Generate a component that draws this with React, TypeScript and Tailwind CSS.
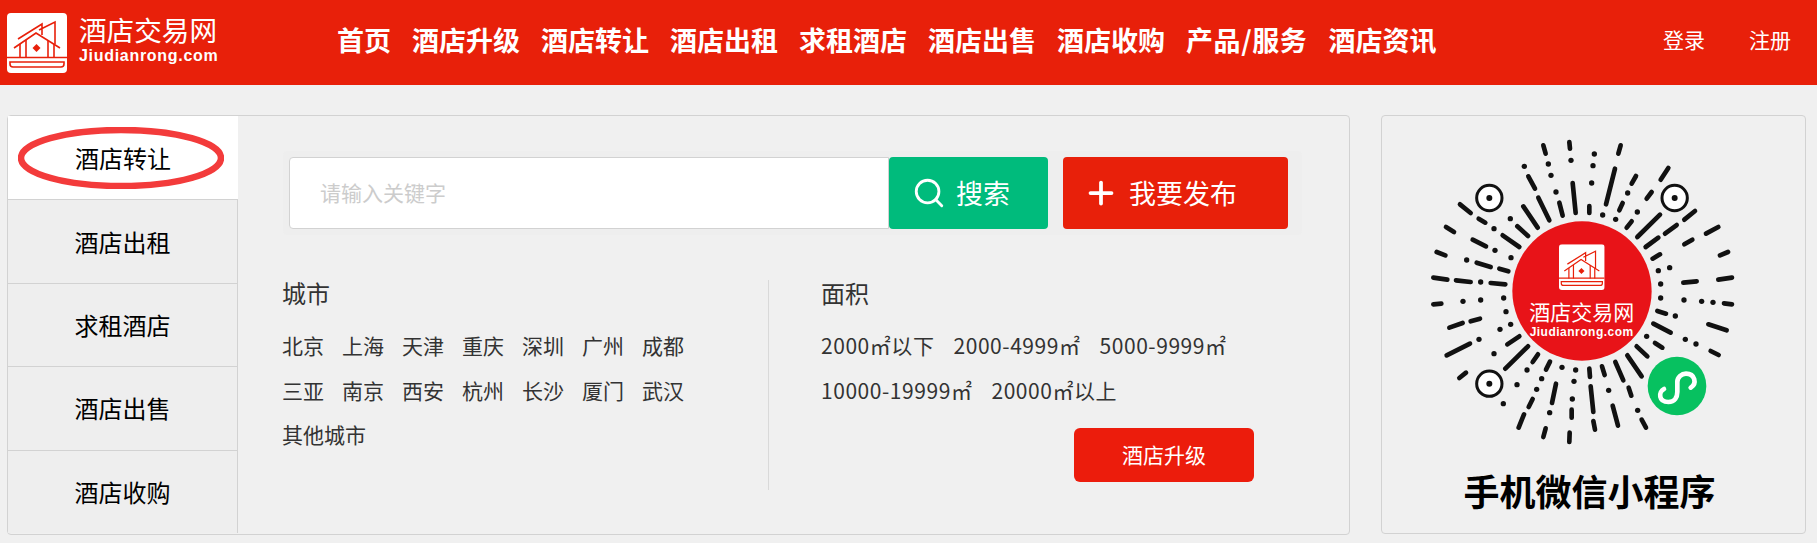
import React from 'react';
import { Search, Plus } from 'lucide-react';

const navItems = ['首页', '酒店升级', '酒店转让', '酒店出租', '求租酒店', '酒店出售', '酒店收购', '产品/服务', '酒店资讯'];
const sideItems = ['酒店转让', '酒店出租', '求租酒店', '酒店出售', '酒店收购'];
const cities = ['北京', '上海', '天津', '重庆', '深圳', '广州', '成都', '三亚', '南京', '西安', '杭州', '长沙', '厦门', '武汉', '其他城市'];

// radial dashes of the mini program code, in 3x coordinates
const dashes = [
  [430, 75, 437, 100], [508, 65, 510, 85], [662, 75, 655, 100], [385, 168, 405, 205], [518, 188, 527, 278],
  [645, 145, 618, 252], [708, 167, 695, 190], [805, 143, 782, 178], [755, 215, 740, 235], [180, 252, 212, 278],
  [236, 295, 256, 307], [138, 320, 162, 335], [415, 232, 448, 300], [478, 247, 488, 286], [568, 257, 568, 278],
  [668, 248, 658, 270], [695, 303, 680, 322], [370, 258, 413, 322], [352, 318, 384, 347], [308, 345, 358, 380],
  [780, 283, 712, 350], [885, 272, 853, 298], [830, 314, 795, 340], [955, 320, 918, 340], [775, 352, 737, 380],
  [877, 358, 853, 372], [780, 402, 758, 415], [984, 395, 960, 405], [110, 395, 136, 405], [218, 358, 258, 378],
  [230, 427, 272, 440], [298, 445, 325, 453], [100, 472, 142, 478], [168, 480, 212, 485], [272, 488, 316, 492],
  [850, 487, 890, 483], [955, 478, 996, 472], [100, 552, 124, 550], [148, 622, 188, 608], [212, 603, 240, 595],
  [972, 549, 996, 552], [772, 572, 798, 580], [760, 610, 812, 637], [925, 612, 980, 630], [140, 705, 210, 670],
  [322, 672, 358, 648], [316, 745, 384, 678], [398, 725, 414, 702], [438, 748, 450, 724], [568, 745, 570, 770],
  [606, 738, 614, 764], [646, 725, 670, 780], [682, 705, 725, 768], [710, 678, 742, 708], [765, 668, 787, 682],
  [932, 692, 956, 704], [178, 773, 198, 757], [468, 790, 456, 848], [572, 798, 580, 875], [686, 802, 694, 826],
  [398, 836, 386, 860], [515, 868, 515, 892], [638, 856, 654, 916], [580, 902, 585, 928], [725, 898, 738, 922],
  [372, 882, 356, 922], [437, 924, 430, 950], [509, 937, 508, 965],
];

const dots = [
  [583, 101], [513, 120], [579, 136], [373, 138], [445, 131], [453, 165], [575, 188], [468, 215], [683, 218],
  [712, 275], [608, 284], [647, 297], [331, 295], [282, 325], [285, 390], [333, 412], [200, 419], [242, 485],
  [242, 539], [189, 543], [311, 533], [318, 574], [332, 612], [300, 627], [775, 451], [809, 442], [782, 491],
  [782, 533], [826, 587], [852, 539], [905, 543], [939, 546], [740, 648], [856, 657], [888, 671], [237, 657],
  [282, 700], [381, 749], [486, 741], [527, 749], [425, 775], [522, 783], [410, 807], [351, 793], [517, 836],
  [449, 877], [310, 850], [626, 810], [713, 870],
];

function LogoMark({ x = 0, y = 0, size = 60 }: { x?: number; y?: number; size?: number }) {
  return (
    <svg x={x} y={y} width={size} height={size} viewBox="0 0 60 60" className="block shrink-0">
      <rect width="60" height="60" rx="4" fill="#fff" />
      <g fill="none" stroke="#e8200a" strokeWidth="1.6">
        <path d="M7 35 29 20 53 35" />
        <path d="M11 26 35 11V22M32 17 48 9V31" />
        <path d="M13 31V45M19 27V45M41 27V45M47 31V45" />
        <path d="M0 44.5H60" />
        <path d="M3 49H57V51Q57 54 54 54H6Q3 54 3 51Z" />
      </g>
      <path d="M29.5 31 33.5 35 29.5 39 25.5 35Z" fill="#e8200a" />
    </svg>
  );
}

function CodeImage() {
  return (
    <svg viewBox="90 50 920 990" className="w-[306.67px] h-[330px] shrink-0">
      <g stroke="#111" strokeWidth="14" strokeLinecap="round">
        {dashes.map((d, i) => (
          <line key={i} x1={d[0]} y1={d[1]} x2={d[2]} y2={d[3]} />
        ))}
      </g>
      {dots.map((d, i) => (
        <circle key={i} cx={d[0]} cy={d[1]} r="8" fill="#111" />
      ))}
      {[[268, 233], [824, 233], [268, 790]].map((c, i) => (
        <g key={i}>
          <circle cx={c[0]} cy={c[1]} r="38" fill="#fff" stroke="#111" strokeWidth="9" />
          <circle cx={c[0]} cy={c[1]} r="9" fill="#111" />
        </g>
      ))}
      <circle cx="546" cy="512" r="209" fill="#e81318" />
      <LogoMark x={477} y={372} size={137} />
      <text x="545" y="598" textAnchor="middle" fontSize="63" fill="#fff" fontFamily="'Noto Sans CJK SC',sans-serif">酒店交易网</text>
      <text x="545" y="648" textAnchor="middle" fontSize="36" fontWeight="700" letterSpacing="1.5" fill="#fff" fontFamily="'Liberation Sans',sans-serif">Jiudianrong.com</text>
      <circle cx="831" cy="797" r="88" fill="#07c160" />
      <path
        d="M792 806C775 815 775 845 805 845C825 845 832 830 832 815V785C832 770 845 760 858 760C885 760 892 790 872 802"
        fill="none"
        stroke="#fff"
        strokeWidth="14"
        strokeLinecap="round"
      />
    </svg>
  );
}

export default function App() {
  return (
    <div className="w-[1817px] h-[543px] overflow-hidden bg-[#f0f0f0] font-['Noto_Sans_CJK_SC','Liberation_Sans',sans-serif]">
      <header className="h-[85px] bg-[#e8200a] flex items-center text-white">
        <div className="ml-[7px] w-[330px] flex items-center">
          <LogoMark />
          <div className="ml-[12px] pb-[7px]">
            <div className="text-[27.6px] leading-[34px] whitespace-nowrap">酒店交易网</div>
            <div className="text-[16px] leading-[20px] font-bold tracking-[0.7px] font-['Liberation_Sans',sans-serif]">Jiudianrong.com</div>
          </div>
        </div>
        <nav className="flex gap-[21px] text-[27px] leading-[36px] font-bold whitespace-nowrap pb-[6px]">
          {navItems.map((item) => (
            <a key={item} className={item === '产品/服务' ? 'tracking-[0.6px]' : ''}>{item}</a>
          ))}
        </nav>
        <div className="ml-auto mr-[26px] flex gap-[44px] text-[21px] leading-[30px] pb-[8px]">
          <a>登录</a>
          <a>注册</a>
        </div>
      </header>

      <main className="flex pt-[30px] pl-[7px] gap-[31px] items-start">
        <section className="relative w-[1343px] h-[420px] flex bg-[#f0f0f0] border border-[#d2d2d2] rounded-[4px]">
          <aside className="w-[230px] shrink-0">
            {sideItems.map((item, i) => (
              <div
                key={item}
                className={
                  i === 0
                    ? 'h-[83.4px] flex items-center justify-center bg-white text-[24px] text-black'
                    : 'h-[83.4px] flex items-center justify-center bg-[#eeeeee] border-r border-t border-[#d2d2d2] text-[24px] text-black'
                }
              >
                {item}
              </div>
            ))}
          </aside>
          <svg viewBox="0 0 206 62" className="absolute left-[10px] top-[11px] w-[206px] h-[62px]">
            <ellipse cx="103" cy="31" rx="100" ry="28" fill="none" stroke="#f33b3b" strokeWidth="6.5" />
          </svg>

          <div className="flex-1 min-w-0">
            <div className="ml-[45px] mt-[35px] w-[1019px] h-[84px] p-[6px] bg-[#eeeeee] rounded-[4px] flex">
              <div className="w-[600px] h-[72px] bg-white border border-[#d2d2d2] rounded-l-[4px] flex items-center pl-[30px] text-[21px] text-[#cccccc]">
                请输入关键字
              </div>
              <button className="w-[159px] h-[72px] bg-[#00bb7c] rounded-[4px] text-white text-[27px] flex items-center pl-[23px] gap-[10px]">
                <Search className="w-[34px] h-[34px]" strokeWidth={2} />
                搜索
              </button>
              <button className="ml-[15px] w-[225px] h-[72px] bg-[#e8200a] rounded-[4px] text-white text-[27px] flex items-center pl-[20px] gap-[10px]">
                <Plus className="w-[36px] h-[36px]" strokeWidth={2.5} />
                我要发布
              </button>
            </div>

            <div className="flex mt-[45px] text-[#333333]">
              <div className="ml-[44px] w-[486px] h-[210px]">
                <h3 className="text-[24px] leading-[30px] font-normal -mt-[2px]">城市</h3>
                <div className="mt-[15px] w-[440px] flex flex-wrap gap-x-[18px] text-[21px] leading-[44.5px]">
                  {cities.map((c) => (
                    <a key={c} className="whitespace-nowrap">{c}</a>
                  ))}
                </div>
              </div>
              <div className="w-px h-[210px] bg-[#d9d9d9]" />
              <div className="ml-[52px] w-[440px]">
                <h3 className="text-[24px] leading-[30px] font-normal -mt-[2px]">面积</h3>
                <div className="mt-[15px] flex flex-wrap gap-x-[19px] text-[21px] leading-[44.5px] tracking-[0.55px]">
                  <a>2000㎡以下</a>
                  <a>2000-4999㎡</a>
                  <a>5000-9999㎡</a>
                  <a className="w-full h-0" />
                  <a>10000-19999㎡</a>
                  <a>20000㎡以上</a>
                </div>
                <button className="block ml-[253px] mt-[16px] w-[180px] h-[54px] bg-[#ec1c0c] rounded-[6px] text-white text-[21px]">
                  酒店升级
                </button>
              </div>
            </div>
          </div>
        </section>

        <aside className="w-[425px] h-[419px] border border-[#d2d2d2] rounded-[4px] flex flex-col">
          <div className="ml-[48px] mt-[21px]">
            <CodeImage />
          </div>
          <h2 className="-mt-[2px] text-center text-[36px] leading-[50px] font-bold text-black pr-[8px]">手机微信小程序</h2>
        </aside>
      </main>
    </div>
  );
}
